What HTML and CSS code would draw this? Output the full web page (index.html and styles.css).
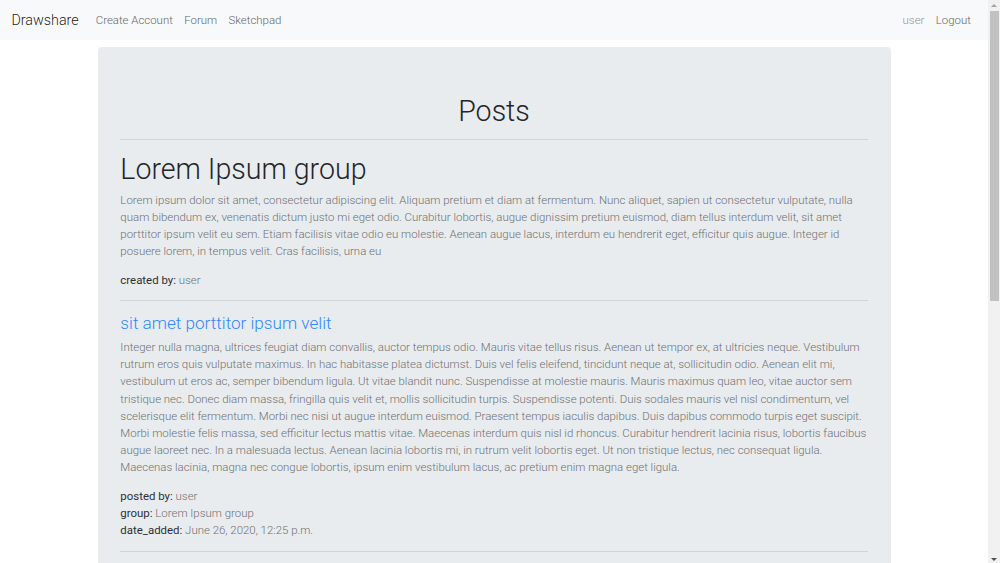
FILE: index.html
```html
<!DOCTYPE html>
<html lang="en">
<head>
<meta charset="utf-8">
<title>Drawshare</title>
<link rel="stylesheet" href="styles.css">
</head>
<body>
<nav class="navbar">
  <a class="brand" href="#">Drawshare</a>
  <ul class="nav">
    <li><a class="nav-link" href="#">Create Account</a></li>
    <li><a class="nav-link" href="#">Forum</a></li>
    <li><a class="nav-link" href="#">Sketchpad</a></li>
  </ul>
  <ul class="nav nav-right">
    <li><span class="nav-text">user</span></li>
    <li><a class="nav-link" href="#">Logout</a></li>
  </ul>
</nav>
<main class="jumbotron">
  <h1 class="page-title">Posts</h1>
  <hr>
  <section class="group">
    <h1 class="group-title">Lorem Ipsum group</h1>
    <p class="text">Lorem ipsum dolor sit amet, consectetur adipiscing elit. Aliquam pretium et diam at fermentum. Nunc aliquet, sapien ut consectetur vulputate, nulla quam bibendum ex, venenatis dictum justo mi eget odio. Curabitur lobortis, augue dignissim pretium euismod, diam tellus interdum velit, sit amet porttitor ipsum velit eu sem. Etiam facilisis vitae odio eu molestie. Aenean augue lacus, interdum eu hendrerit eget, efficitur quis augue. Integer id posuere lorem, in tempus velit. Cras facilisis, urna eu</p>
    <p class="meta"><span class="label">created by:</span> user</p>
  </section>
  <hr>
  <article class="post">
    <h4 class="post-title"><a href="#">sit amet porttitor ipsum velit</a></h4>
    <p class="text">Integer nulla magna, ultrices feugiat diam convallis, auctor tempus odio. Mauris vitae tellus risus. Aenean ut tempor ex, at ultricies neque. Vestibulum rutrum eros quis vulputate maximus. In hac habitasse platea dictumst. Duis vel felis eleifend, tincidunt neque at, sollicitudin odio. Aenean elit mi, vestibulum ut eros ac, semper bibendum ligula. Ut vitae blandit nunc. Suspendisse at molestie mauris. Mauris maximus quam leo, vitae auctor sem tristique nec. Donec diam massa, fringilla quis velit et, mollis sollicitudin turpis. Suspendisse potenti. Duis sodales mauris vel nisl condimentum, vel scelerisque elit fermentum. Morbi nec nisi ut augue interdum euismod. Praesent tempus iaculis dapibus. Duis dapibus commodo turpis eget suscipit. Morbi molestie felis massa, sed efficitur lectus mattis vitae. Maecenas interdum quis nisl id rhoncus. Curabitur hendrerit lacinia risus, lobortis faucibus augue laoreet nec. In a malesuada lectus. Aenean lacinia lobortis mi, in rutrum velit lobortis eget. Ut non tristique lectus, nec consequat ligula. Maecenas lacinia, magna nec congue lobortis, ipsum enim vestibulum lacus, ac pretium enim magna eget ligula.</p>
    <p class="meta">
      <span class="label">posted by:</span> user<br>
      <span class="label">group:</span> <a class="muted-link" href="#">Lorem Ipsum group</a><br>
      <span class="label">date_added:</span> June 26, 2020, 12:25 p.m.
    </p>
  </article>
  <hr>
</main>
<div class="scrollbar" aria-hidden="true">
  <span class="sb-arrow sb-up"></span>
  <span class="sb-thumb"></span>
  <span class="sb-arrow sb-down"></span>
</div>
</body>
</html>
```
FILE: styles.css
```css
* { box-sizing: border-box; }

html, body { overflow: hidden; }

body {
  margin: 0 12px 0 0;
  font-family: Roboto, "Liberation Sans", sans-serif;
  font-weight: 300;
  font-size: 11.43px;
  line-height: 1.5;
  color: #212529;
  background: #fff;
}

a { text-decoration: none; }

.navbar {
  display: flex;
  align-items: center;
  height: 40px;
  padding: 2px 11.43px 0;
  background: #f8f9fa;
}

.brand {
  font-size: 14.3px;
  color: rgba(0, 0, 0, 0.9);
  margin-right: 11.43px;
  line-height: 1.5;
}

.nav {
  display: flex;
  list-style: none;
  margin: 0;
  padding: 0;
}

.nav-right { margin-left: auto; }

.nav-link {
  display: block;
  padding: 5.7px;
  color: #666666;
}

.nav-text {
  display: block;
  padding: 5.7px;
  color: #959595;
}

.jumbotron {
  width: 793px;
  margin: 7px auto 0;
  padding: 46.7px 22.86px 30px;
  background: #e9ecef;
  border-radius: 4px;
}

h1, h4 {
  margin: 0 0 5.7px;
  font-weight: 300;
  line-height: 1.2;
}

.page-title {
  font-size: 28.57px;
  text-align: center;
}

.group-title { font-size: 28.57px; }

.post-title { font-size: 17.14px; }
.post-title a { color: #2f86ff; }

hr {
  margin: 11.43px 0;
  border: 0;
  border-top: 1px solid rgba(0, 0, 0, 0.1);
}

p { margin: 0 0 11.43px; }

.text { color: #6e7072; }

.meta { color: #6e7072; }
.meta .label { color: #2b2f33; font-weight: 400; }

.muted-link { color: #6e7072; }

.scrollbar {
  position: fixed;
  top: 0;
  right: 0;
  bottom: 0;
  width: 12px;
  background: #f1f1f1;
  display: flex;
  flex-direction: column;
  align-items: center;
}

.sb-arrow {
  width: 0;
  height: 0;
  border-left: 3px solid transparent;
  border-right: 3px solid transparent;
  margin: 4px 0;
}
.sb-up { border-bottom: 3px solid #a3a3a3; }
.sb-down { border-top: 3px solid #505050; margin-top: auto; margin-bottom: 2px; }

.sb-thumb {
  width: 9px;
  height: 290px;
  background: #c1c1c1;
}
```
